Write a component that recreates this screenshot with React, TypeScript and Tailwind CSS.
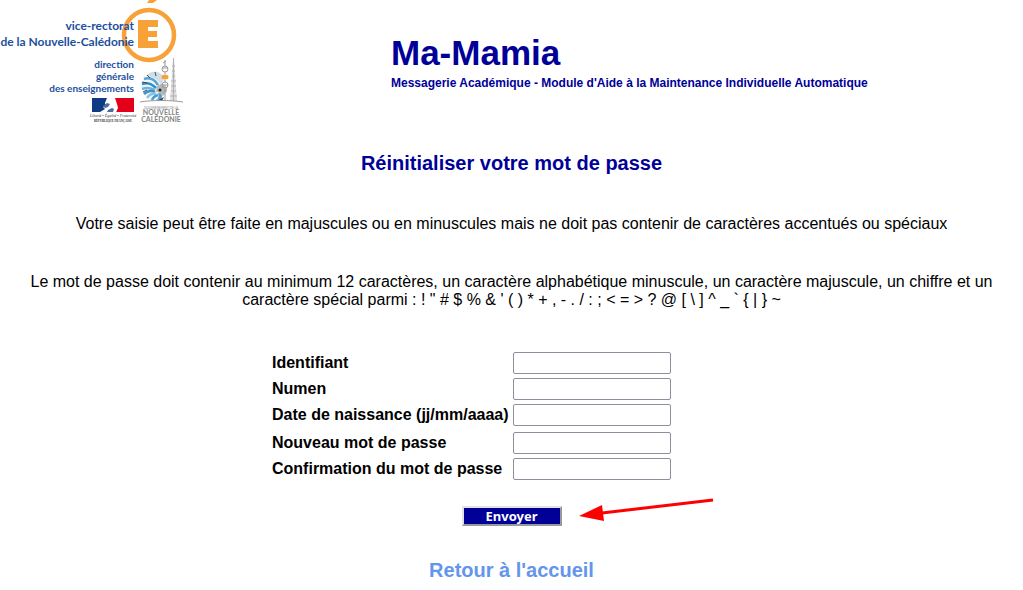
const fields = [
  { id: 'identifiant', label: 'Identifiant', type: 'text' },
  { id: 'numen', label: 'Numen', type: 'text' },
  { id: 'naissance', label: 'Date de naissance (jj/mm/aaaa)', type: 'text' },
];

const passwordFields = [
  { id: 'nouveau', label: 'Nouveau mot de passe', type: 'password' },
  { id: 'confirmation', label: 'Confirmation du mot de passe', type: 'password' },
];

const specialChars = `! " # $ % & ' ( ) * + , - . / : ; < = > ? @ [ \\ ] ^ _ \` { | } ~`;
const passwordRule = `Le mot de passe doit contenir au minimum 12 caractères, un caractère alphabétique minuscule, un caractère majuscule, un chiffre et un caractère spécial parmi : ${specialChars}`;

function Logo() {
  return (
    <svg
      width="184"
      height="126"
      viewBox="0 0 184 126"
      className="shrink-0"
      role="img"
      aria-label="Vice-rectorat de la Nouvelle-Calédonie"
    >
      {/* academy badge */}
      <path d="M149 0h8l-4 3h-6z" fill="#f7a239" />
      <circle cx="149" cy="35" r="25" fill="#fff" stroke="#f7a239" strokeWidth="4.5" />
      <path d="M138 20h20v7h-10v4h9v6h-9v4h10v7h-20z" fill="#f7a239" />

      <g fill="#1d4f9f" textAnchor="end" fontFamily="Lato, 'Liberation Sans', sans-serif" fontWeight="700">
        <text x="134" y="30" fontSize="12">vice-rectorat</text>
        <text x="134" y="46" fontSize="12">de la Nouvelle-Calédonie</text>
        <text x="134" y="68" fontSize="10">direction</text>
        <text x="134" y="80" fontSize="10">générale</text>
        <text x="134" y="92" fontSize="10">des enseignements</text>
      </g>

      {/* republic flag */}
      <path d="M92 98h15l-2 5 2 9H92z" fill="#0d3c82" />
      <path d="M115 98h19v14h-18l2-4-1-4z" fill="#e2001a" />
      <path d="M100 112l5-3-2-2 3-2-1-2 4-4 4 1 2 3 1 3-1 2 2 3-2 1z" fill="#fff" />
      <path d="M103 106l4-3 3 1-2 3-3 1zM108 110l4-2 2 1-1 3h-6z" fill="#4b6ba5" />
      <g fill="#333" textAnchor="middle" fontFamily="'Liberation Serif', serif">
        <text x="113" y="117" fontSize="4" fontStyle="italic">Liberté • Égalité • Fraternité</text>
        <text x="113" y="122" fontSize="3" fontWeight="700">RÉPUBLIQUE FRANÇAISE</text>
      </g>

      {/* nautilus shell */}
      <path d="M143 80c3-8 14-12 20-5 5 6 4 14 1 20-3 5-8 7-13 5-7-3-11-11-8-20z" fill="#f1f6fa" />
      <path d="M146 76c5-6 14-6 18 2l-3 7c-3-6-9-9-15-9z" fill="#cfdde8" />
      <g fill="none" strokeWidth="2.5">
        <path d="M144 79c6-2 11 1 14 6" stroke="#58a5d3" />
        <path d="M142 84c5-2 10 0 14 4" stroke="#2f8ec9" />
        <path d="M142 89c5-2 9-1 13 1" stroke="#6fb3dc" />
        <path d="M144 94c3-3 7-4 11-2" stroke="#3c94cb" />
        <path d="M147 98c2-3 5-5 9-4" stroke="#8fc3e2" />
        <path d="M152 100c1-3 3-4 6-5" stroke="#4b9dce" />
      </g>
      <g stroke="#4a4a4a" strokeWidth="1">
        <path d="M142 82l5 1M143 92l4-2M147 75l3 3M155 72l1 4" />
      </g>
      <path d="M157 86c5-4 11 0 10 5l-4 5c-2-3-4-4-7-4z" fill="#b7b7b7" />
      <path d="M158 93c4 0 5 3 3 6l-5 1c3-2 3-4 2-7z" fill="#4aa0d2" />
      <circle cx="160" cy="90" r="1.5" fill="#222" />
      <path d="M160 99l4-2-2 4h-6z" fill="#3b4650" />

      {/* carved spire and pine */}
      <path d="M173 58h1l3 43h-7z" fill="#dedede" />
      <path d="M173.500 58v43M172 66h3M172 71h3M172 76h3M171 81h5M171 86h5M171 91h5M170 96h7" stroke="#b0b0b0" strokeWidth="1" />
      <g fill="none" stroke="#999" strokeWidth="1">
        <path d="M165 60v6M163 63l3-2M165 72v2M165 80v2M165 89v11" />
        <circle cx="165" cy="69" r="3" />
        <circle cx="165" cy="85" r="3" />
        <path d="M162 68l6 0M162 85h6" />
      </g>
      <ellipse cx="165" cy="77" rx="3.500" ry="2.500" fill="#f7a239" />
      <path d="M140 102c12-2 30-2 43 0" fill="none" stroke="#999" />
      <g fill="#858585" textAnchor="middle" fontFamily="Lato, 'Liberation Sans', sans-serif">
        <text x="161" y="109" fontSize="3">GOUVERNEMENT DE LA</text>
        <text x="161" y="115" fontSize="7" fontWeight="700">NOUVELLE</text>
        <text x="161" y="122" fontSize="7" fontWeight="700">CALÉDONIE</text>
      </g>
    </svg>
  );
}

function Field({ id, label, type }: { id: string; label: string; type: string }) {
  return (
    <>
      <label htmlFor={id} className="font-bold">
        {label}
      </label>
      <input
        id={id}
        name={id}
        type={type}
        className="h-[22px] w-[158px] rounded-xs border border-[#8f8f9d] bg-white px-1 text-[13px]"
      />
    </>
  );
}

function Arrow() {
  return (
    <svg width="138" height="30" viewBox="0 0 138 30" className="absolute bottom-0 left-full ml-4" aria-hidden="true">
      <path d="M24 17L135 4" stroke="#f00" strokeWidth="3" />
      <path d="M1 20L24 9L26 25z" fill="#f00" />
    </svg>
  );
}

export default function App() {
  return (
    <div className="bg-white font-['Liberation_Sans',Arial,sans-serif] text-base leading-[18px] text-black">
      <header className="flex items-start">
        <Logo />
        <div className="ml-[207px] pt-8 font-bold text-[#000099]">
          <h1 className="text-[35px] leading-[42px]">Ma-Mamia</h1>
          <p className="text-xs leading-[18px]">
            Messagerie Académique - Module d'Aide à la Maintenance Individuelle Automatique
          </p>
        </div>
      </header>

      <main className="flex flex-col items-center px-6 text-center">
        <h2 className="mt-[25px] text-xl leading-6 font-bold text-[#000099]">Réinitialiser votre mot de passe</h2>
        <p className="mt-10">
          Votre saisie peut être faite en majuscules ou en minuscules mais ne doit pas contenir de caractères accentués
          ou spéciaux
        </p>
        <p className="mt-10">{passwordRule}</p>

        <form className="mt-[43px] flex flex-col items-center" onSubmit={(e) => e.preventDefault()}>
          <div className="grid grid-cols-[237px_auto] items-center gap-x-1 gap-y-1 pr-20 text-left whitespace-nowrap">
            {fields.map((field) => (
              <Field key={field.id} {...field} />
            ))}
          </div>
          <div className="mt-1.5 grid grid-cols-[237px_auto] items-center gap-x-1 gap-y-1 pr-20 text-left whitespace-nowrap">
            {passwordFields.map((field) => (
              <Field key={field.id} {...field} />
            ))}
          </div>
          <div className="relative mt-[26px]">
            <button
              type="submit"
              className="flex h-5 w-[100px] items-center justify-center border-2 border-[#e3e3e3] border-r-[#999] border-b-[#999] bg-[#000099] font-['Noto_Sans',Verdana,sans-serif] text-[13px] font-bold text-white"
            >
              Envoyer
            </button>
            <Arrow />
          </div>
        </form>

        <a href="#accueil" className="mt-8 text-xl leading-6 font-bold text-[#6495ed]">
          Retour à l'accueil
        </a>
      </main>
    </div>
  );
}
